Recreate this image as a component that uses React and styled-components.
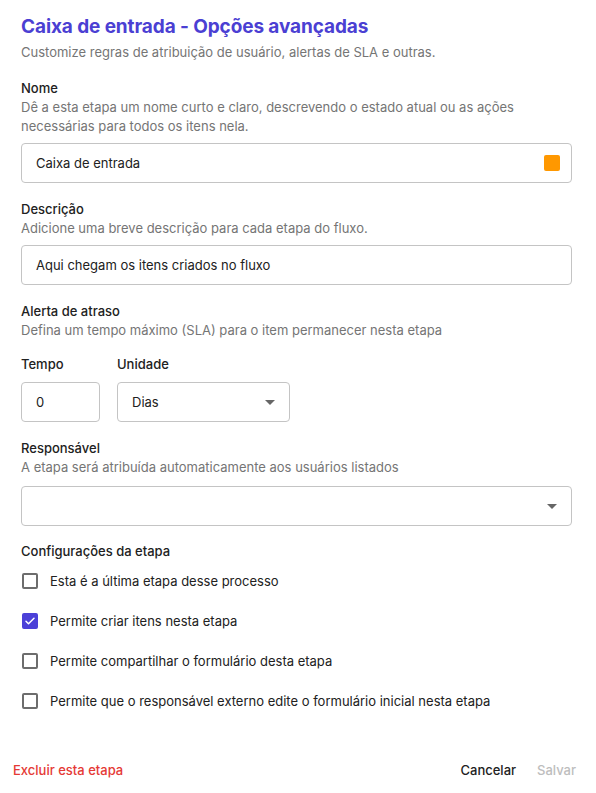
import React, { useState } from 'react';
import styled, { createGlobalStyle } from 'styled-components';

const GlobalStyle = createGlobalStyle`
  body {
    margin: 0;
    background: #ffffff;
    font-family: Inter, "Noto Sans", sans-serif;
    color: #212121;
  }
`;

const Page = styled.div`
  width: 596px;
  min-height: 793px;
  box-sizing: border-box;
  padding: 15px 24px 0 21px;
  display: flex;
  flex-direction: column;
`;

const Title = styled.h1`
  margin: 0;
  font-size: 19px;
  line-height: 24px;
  font-weight: 700;
  color: #4b3fd3;
  letter-spacing: -0.1px;
`;

const Help = styled.p`
  margin: 0;
  font-size: 13px;
  line-height: 19px;
  color: #757575;
`;

const Subtitle = styled(Help)`
  margin-top: 4px;
`;

const Section = styled.div`
  margin-top: ${p => p.$gap || 17}px;
  display: flex;
  flex-direction: column;
`;

const Label = styled.div`
  font-size: 13px;
  line-height: 19px;
  font-weight: 500;
  color: #212121;
`;

const Field = styled.div`
  margin-top: ${p => p.$gap || 7}px;
  height: 40px;
  width: ${p => p.$width || '100%'};
  box-sizing: border-box;
  border: 1px solid #c4c4c4;
  border-radius: 4px;
  display: flex;
  align-items: center;
  justify-content: space-between;
  padding: 0 14px;
  font-size: 13px;
  color: #212121;
`;

const ColorSwatch = styled.span`
  width: 16px;
  height: 16px;
  border-radius: 2px;
  background: #ff9800;
  margin-right: -3px;
`;

const Arrow = styled.span`
  width: 0;
  height: 0;
  border-left: 5px solid transparent;
  border-right: 5px solid transparent;
  border-top: 5px solid #666666;
`;

const Row = styled.div`
  display: flex;
  gap: 17px;
`;

const Column = styled.div`
  display: flex;
  flex-direction: column;
`;

const CheckList = styled.div`
  display: flex;
  flex-direction: column;
`;

const CheckRow = styled.label`
  height: 40px;
  display: flex;
  align-items: center;
  gap: 12px;
  font-size: 13px;
  color: #212121;
  cursor: pointer;
`;

const Box = styled.span`
  width: 16px;
  height: 16px;
  box-sizing: border-box;
  margin-left: 1px;
  border-radius: 2px;
  border: 2px solid ${p => (p.$checked ? '#4b40d8' : '#6d6d6d')};
  background: ${p => (p.$checked ? '#4b40d8' : '#fff')};
  display: flex;
  align-items: center;
  justify-content: center;
`;

const Footer = styled.div`
  margin-top: 40px;
  margin-left: -8px;
  margin-right: -4px;
  display: flex;
  align-items: center;
  justify-content: space-between;
  font-size: 13px;
  line-height: 19px;
`;

const TextButton = styled.button`
  background: none;
  border: none;
  padding: 0;
  font: inherit;
  font-weight: 500;
  color: ${p => p.$color || '#212121'};
  cursor: pointer;
`;

const Actions = styled.div`
  display: flex;
  gap: 21px;
`;

const options = [
  { text: 'Esta é a última etapa desse processo', checked: false },
  { text: 'Permite criar itens nesta etapa', checked: true },
  { text: 'Permite compartilhar o formulário desta etapa', checked: false },
  { text: 'Permite que o responsável externo edite o formulário inicial nesta etapa', checked: false },
];

const Check = () => (
  <svg width="12" height="12" viewBox="0 0 24 24">
    <path d="M4 12.5l5 5L20 6.5" fill="none" stroke="#fff" strokeWidth="3" strokeLinecap="round" strokeLinejoin="round" />
  </svg>
);

const App = () => {
  const [checks, setChecks] = useState(options.map(o => o.checked));

  const toggle = i => setChecks(c => c.map((v, j) => (j === i ? !v : v)));

  return (
    <Page>
      <GlobalStyle />
      <Title>Caixa de entrada - Opções avançadas</Title>
      <Subtitle>Customize regras de atribuição de usuário, alertas de SLA e outras.</Subtitle>

      <Section>
        <Label>Nome</Label>
        <Help>Dê a esta etapa um nome curto e claro, descrevendo o estado atual ou as ações necessárias para todos os itens nela.</Help>
        <Field>
          Caixa de entrada
          <ColorSwatch />
        </Field>
      </Section>

      <Section>
        <Label>Descrição</Label>
        <Help>Adicione uma breve descrição para cada etapa do fluxo.</Help>
        <Field>Aqui chegam os itens criados no fluxo</Field>
      </Section>

      <Section>
        <Label>Alerta de atraso</Label>
        <Help>Defina um tempo máximo (SLA) para o item permanecer nesta etapa</Help>
      </Section>

      <Section $gap={15}>
        <Row>
          <Column>
            <Label>Tempo</Label>
            <Field $gap={8} $width="79px">0</Field>
          </Column>
          <Column>
            <Label>Unidade</Label>
            <Field $gap={8} $width="173px">
              Dias
              <Arrow />
            </Field>
          </Column>
        </Row>
      </Section>

      <Section>
        <Label>Responsável</Label>
        <Help>A etapa será atribuída automaticamente aos usuários listados</Help>
        <Field $gap={9}>
          <span />
          <Arrow />
        </Field>
      </Section>

      <Section $gap={16}>
        <Label>Configurações da etapa</Label>
        <CheckList>
          {options.map((o, i) => (
            <CheckRow key={o.text} onClick={() => toggle(i)}>
              <Box $checked={checks[i]}>{checks[i] && <Check />}</Box>
              {o.text}
            </CheckRow>
          ))}
        </CheckList>
      </Section>

      <Footer>
        <TextButton $color="#e53935">Excluir esta etapa</TextButton>
        <Actions>
          <TextButton>Cancelar</TextButton>
          <TextButton $color="#bdbdbd">Salvar</TextButton>
        </Actions>
      </Footer>
    </Page>
  );
};

export default App;
